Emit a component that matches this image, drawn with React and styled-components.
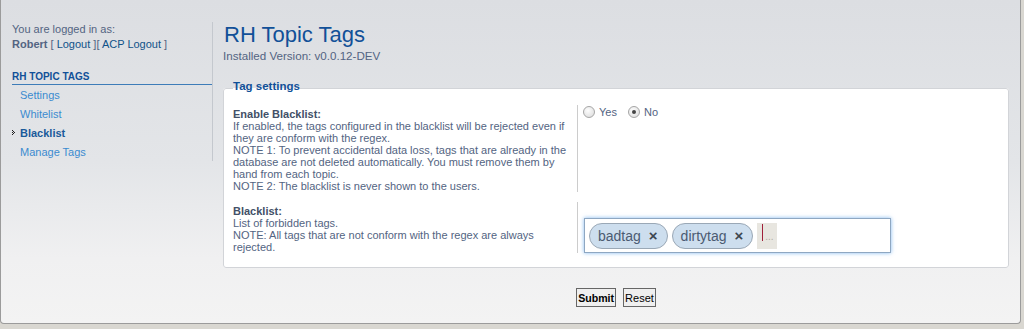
import React from 'react'
import styled, { createGlobalStyle } from 'styled-components'

const GlobalStyle = createGlobalStyle`
  html, body {
    margin: 0;
    padding: 0;
    background: #d9d7d1;
  }
  body {
    font-family: "Liberation Sans", Arial, sans-serif;
    color: #536482;
  }
`

const Panel = styled.div`
  box-sizing: border-box;
  width: 1021px;
  height: 324px;
  display: flex;
  align-items: flex-start;
  padding-top: 22px;
  background: linear-gradient(to bottom, #dcdee2 0%, #e3e5e8 50%, #f0f0f1 80%, #f3f3f3 100%);
  border: 1px solid #9b9b9b;
  border-top: none;
  border-radius: 0 0 4px 4px;
`

const Sidebar = styled.div`
  width: 200px;
  margin-left: 11px;
  border-right: 1px solid #c4c8ce;
  font-size: 11px;
`

const Login = styled.div`
  line-height: 15px;
  color: #536482;

  & b {
    font-weight: bold;
  }
  & a {
    color: #105289;
    text-decoration: none;
  }
`

const MenuTitle = styled.div`
  margin-top: 19px;
  font-size: 10px;
  font-weight: bold;
  line-height: 12px;
  text-transform: uppercase;
  color: #115098;
  border-bottom: 1px solid #3d7cb8;
  padding-bottom: 1px;
`

const Menu = styled.ul`
  list-style: none;
  margin: 0;
  padding: 0;
`

const MenuItem = styled.li`
  display: flex;
  align-items: center;
  height: 19px;
  font-size: 11px;
  font-weight: ${p => (p.$active ? 'bold' : 'normal')};
  color: ${p => (p.$active ? '#1a5a9a' : '#3b8bd0')};
`

const Marker = styled.span`
  display: inline-flex;
  width: 8px;
  align-items: center;
`

const Main = styled.div`
  flex: 1;
  margin: 0 11px 0 10px;
`

const Title = styled.h1`
  margin: 0;
  font-size: 22px;
  font-weight: normal;
  line-height: 26px;
  color: #115098;
  padding-left: 1px;
`

const Version = styled.p`
  margin: 1px 0 0;
  font-size: 11.6px;
  line-height: 14px;
  color: #536482;
`

const Fieldset = styled.fieldset`
  margin: 16px 0 0;
  padding: 8px 9px 14px;
  background: #fff;
  border: 1px solid #d2d4d8;
  border-radius: 3px;
`

const Legend = styled.legend`
  padding: 0 0 4px;
  font-size: 11.5px;
  font-weight: bold;
  line-height: 14px;
  color: #115098;
`

const Row = styled.dl`
  display: flex;
  margin: 0 0 10px;

  &:last-child {
    margin-bottom: 0;
  }
`

const Term = styled.dt`
  width: 344px;
  padding-top: 3px;
  border-right: 1px solid #ccc;
  font-size: 11px;
  line-height: 12px;
  color: #536482;

  & strong {
    color: #425067;
  }
`

const Def = styled.dd`
  margin: 0;
  padding-left: ${p => p.$pad || 5}px;
  padding-top: ${p => p.$top || 0}px;
`

const Radios = styled.div`
  display: flex;
  align-items: center;
  height: 14px;
  font-size: 11px;
  color: #536482;
`

const RadioLabel = styled.label`
  display: inline-flex;
  align-items: center;
  gap: 4px;
  margin-right: 11px;
`

const Radio = styled.span`
  box-sizing: border-box;
  width: 12px;
  height: 12px;
  border-radius: 50%;
  border: 1px solid #a6a6a6;
  background: radial-gradient(circle at 40% 35%, #fdfdfd 0%, #e4e4e4 70%, #d6d6d6 100%);
  display: inline-flex;
  align-items: center;
  justify-content: center;

  &::after {
    content: '';
    width: 4px;
    height: 4px;
    border-radius: 50%;
    background: ${p => (p.$checked ? '#444' : 'transparent')};
  }
`

const TagBox = styled.div`
  box-sizing: border-box;
  width: 307px;
  height: 35px;
  display: flex;
  align-items: center;
  gap: 4px;
  padding: 0 4px;
  background: #fff;
  border: 1px solid #8ea7c2;
  box-shadow: 0 0 4px rgba(90, 160, 235, 0.75);
`

const Tag = styled.span`
  box-sizing: border-box;
  height: 26px;
  display: inline-flex;
  align-items: center;
  gap: 8px;
  padding: 0 9px 0 8px;
  border: 1px solid #9aa8b6;
  border-radius: 13px;
  background: #cddeee;
  font-size: 14px;
  color: #4b5b72;
`

const Remove = styled.span`
  font-size: 15px;
  line-height: 15px;
  font-weight: bold;
  color: #3d4650;
`

const NewTag = styled.span`
  box-sizing: border-box;
  width: 20px;
  height: 26px;
  display: inline-flex;
  align-items: flex-end;
  padding: 0 0 7px 5px;
  background: #e8e6e0;
  font-size: 10px;
  line-height: 10px;
  color: #b0aca4;
`

const Caret = styled.span`
  align-self: center;
  width: 1px;
  height: 17px;
  margin-right: 2px;
  background: #a0203a;
`

const Buttons = styled.div`
  display: flex;
  justify-content: center;
  gap: 7px;
  margin-top: 20px;
`

const Button = styled.button`
  height: 19px;
  padding: 0 1px;
  margin: 0;
  border: 1px solid #666;
  background: #efefef;
  font-family: "Liberation Sans", Arial, sans-serif;
  font-size: ${p => (p.$primary ? 10.6 : 11)}px;
  font-weight: ${p => (p.$primary ? 'bold' : 'normal')};
  color: #000;
`

const Bullet = () => (
  <svg width="3" height="5" viewBox="0 0 3 5">
    <rect x="0" y="0" width="1" height="1" fill="#222" />
    <rect x="0" y="2" width="1" height="1" fill="#222" />
    <rect x="0" y="4" width="1" height="1" fill="#222" />
    <rect x="1" y="1" width="1" height="1" fill="#222" />
    <rect x="1" y="3" width="1" height="1" fill="#222" />
    <rect x="2" y="2" width="1" height="1" fill="#222" />
  </svg>
)

const menu = [
  { label: 'Settings' },
  { label: 'Whitelist' },
  { label: 'Blacklist', active: true },
  { label: 'Manage Tags' },
]

const App = () => (
  <>
    <GlobalStyle />
    <Panel>
      <Sidebar>
        <Login>
          You are logged in as:<br />
          <b>Robert</b> [ <a href="#">Logout</a> ][ <a href="#">ACP Logout</a> ]
        </Login>
        <MenuTitle>RH Topic Tags</MenuTitle>
        <Menu>
          {menu.map(item => (
            <MenuItem key={item.label} $active={item.active}>
              <Marker>{item.active && <Bullet />}</Marker>
              {item.label}
            </MenuItem>
          ))}
        </Menu>
      </Sidebar>
      <Main>
        <Title>RH Topic Tags</Title>
        <Version>Installed Version: v0.0.12-DEV</Version>
        <Fieldset>
          <Legend>Tag settings</Legend>
          <Row>
            <Term>
              <strong>Enable Blacklist:</strong><br />
              If enabled, the tags configured in the blacklist will be rejected even if they are conform with the regex.<br />
              NOTE 1: To prevent accidental data loss, tags that are already in the database are not deleted automatically. You must remove them by hand from each topic.<br />
              NOTE 2: The blacklist is never shown to the users.
            </Term>
            <Def>
              <Radios>
                <RadioLabel><Radio />Yes</RadioLabel>
                <RadioLabel><Radio $checked />No</RadioLabel>
              </Radios>
            </Def>
          </Row>
          <Row>
            <Term>
              <strong>Blacklist:</strong><br />
              List of forbidden tags.<br />
              NOTE: All tags that are not conform with the regex are always rejected.
            </Term>
            <Def $pad={6} $top={16}>
              <TagBox>
                <Tag>badtag<Remove>×</Remove></Tag>
                <Tag>dirtytag<Remove>×</Remove></Tag>
                <NewTag><Caret />...</NewTag>
              </TagBox>
            </Def>
          </Row>
        </Fieldset>
        <Buttons>
          <Button $primary>Submit</Button>
          <Button>Reset</Button>
        </Buttons>
      </Main>
    </Panel>
  </>
)

export default App
